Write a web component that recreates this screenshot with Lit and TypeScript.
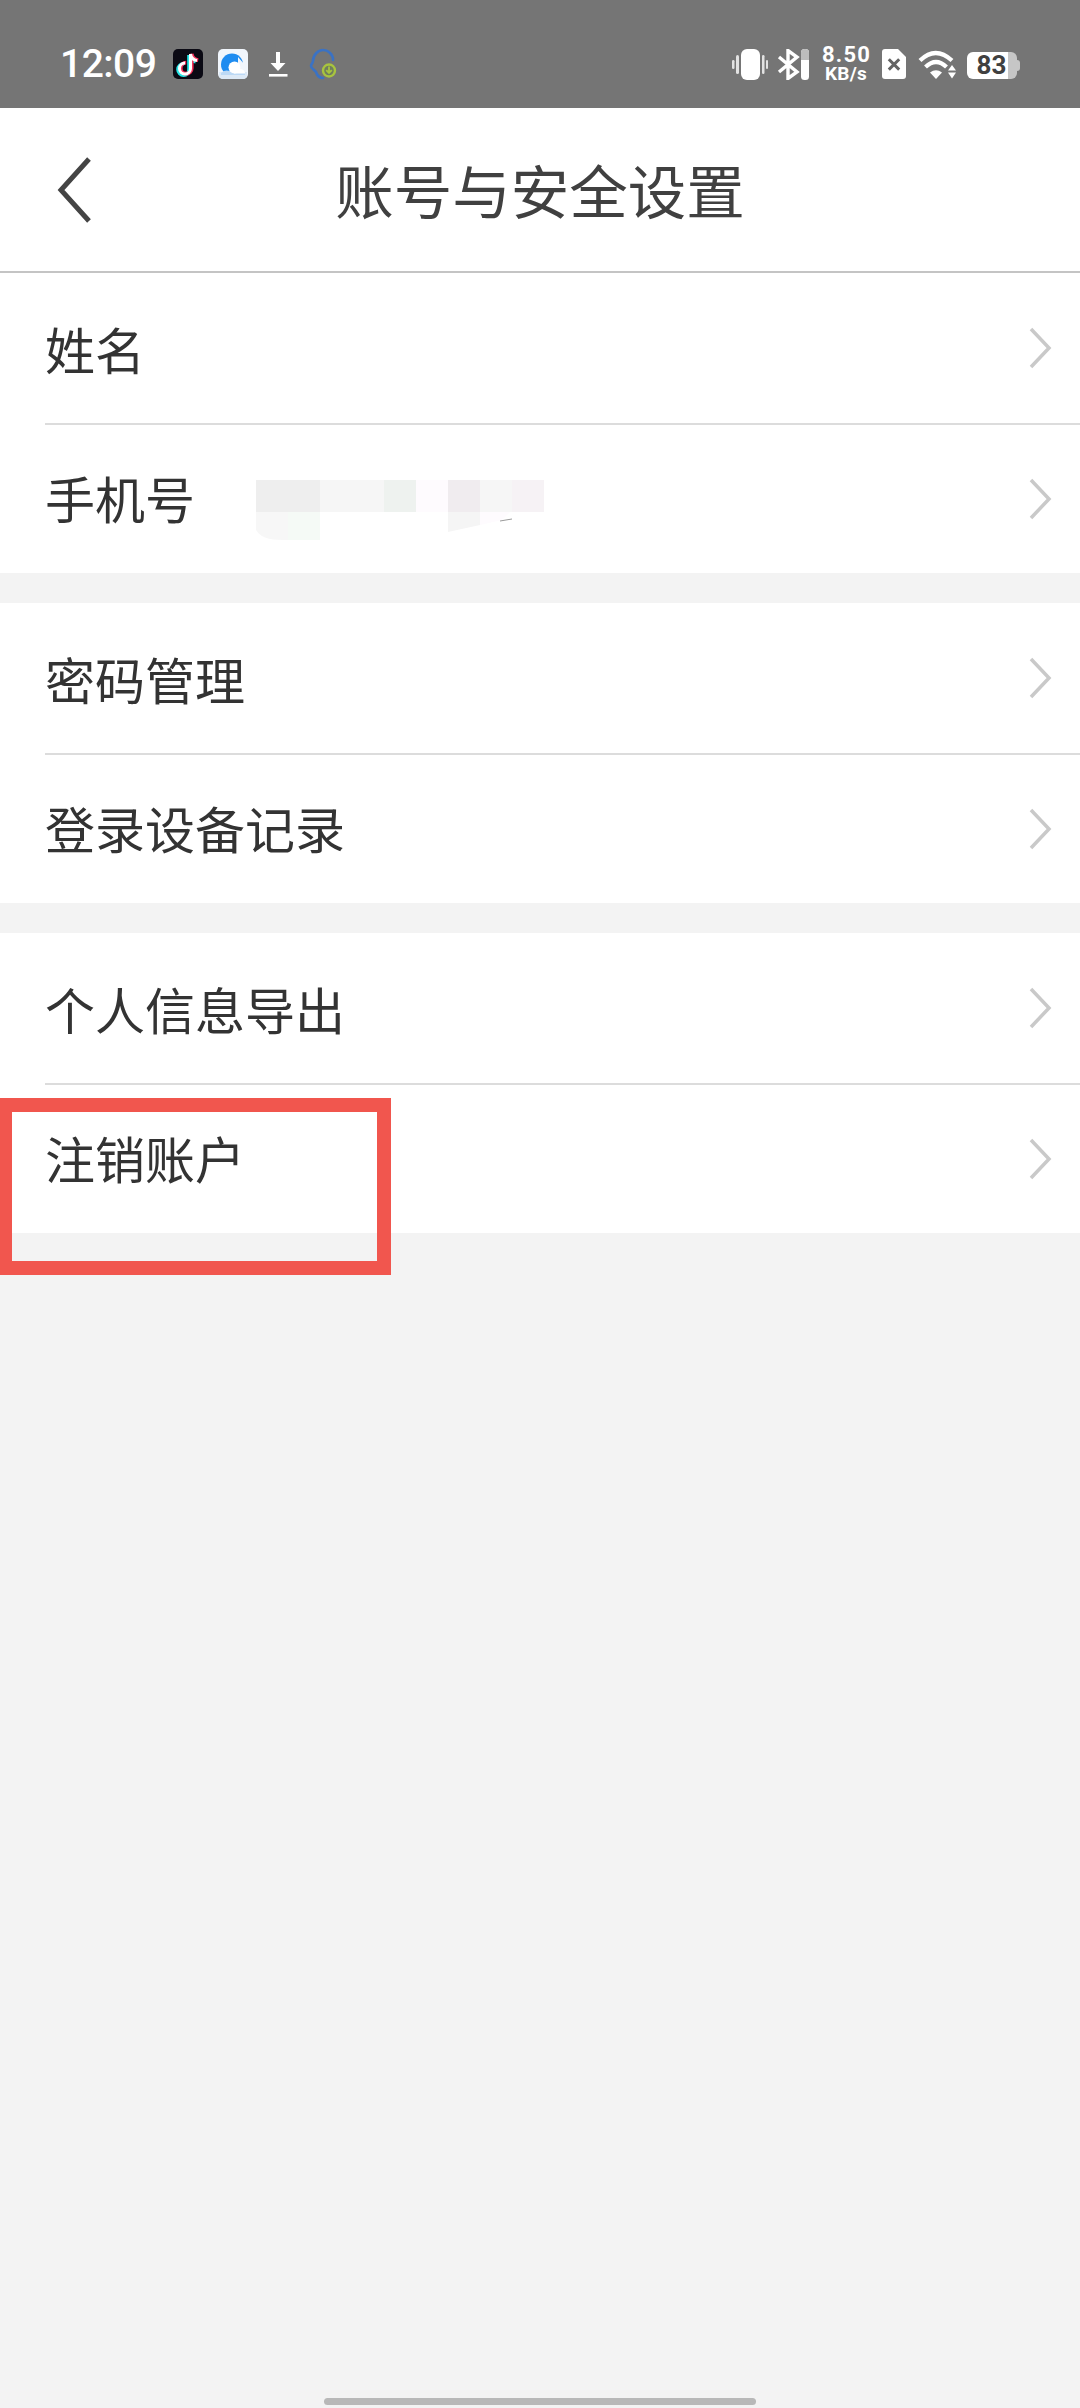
import { LitElement, html, css, svg } from "lit";
import { customElement } from "lit/decorators.js";

type Row = { label: string; masked?: boolean };

const SECTIONS: Row[][] = [
  [{ label: "姓名" }, { label: "手机号", masked: true }],
  [{ label: "密码管理" }, { label: "登录设备记录" }],
  [{ label: "个人信息导出" }, { label: "注销账户" }],
];

// Pixelated privacy mask over the phone number: [x, y, w, h, fill]
const MASK: [number, number, number, number, string][] = [
  [0, 0, 64, 32, "#eeeeee"],
  [64, 0, 64, 32, "#f6f6f6"],
  [128, 0, 32, 32, "#eef2ef"],
  [160, 0, 32, 32, "#fefbfe"],
  [192, 0, 32, 32, "#f0ecef"],
  [224, 0, 32, 32, "#f6f6f6"],
  [256, 0, 32, 32, "#f6f2f5"],
];

const NOTE = "M17.500 5v14.500a5.500 5.500 0 1 1-5.500-5.500M17.500 5c.5 3.500 3 6 6.500 6.500";

@customElement("app-root")
export class AppRoot extends LitElement {
  static styles = css`
    :host {
      display: block;
      position: relative;
      width: 1080px;
      height: 2408px;
      overflow: hidden;
      font-family: "Noto Sans CJK SC", "Noto Sans", sans-serif;
    }
    .page {
      display: flex;
      flex-direction: column;
      height: 100%;
      background: #f3f3f3;
    }
    .status {
      height: 108px;
      box-sizing: border-box;
      padding: 20px 60px 0;
      background: #757575;
      color: #fff;
      display: flex;
      align-items: center;
      justify-content: space-between;
      flex: none;
    }
    .status-left {
      display: flex;
      align-items: center;
      gap: 15px;
    }
    .status-right {
      display: flex;
      align-items: center;
      gap: 9px;
    }
    .status svg {
      display: block;
      flex: none;
    }
    .status svg.bt {
      margin-right: 4px;
    }
    .time {
      font: 500 39px/1 Roboto, sans-serif;
      letter-spacing: -0.5px;
      width: 98px;
    }
    .speed {
      width: 48px;
      font-family: Roboto, sans-serif;
      font-weight: 700;
      text-align: center;
      white-space: nowrap;
    }
    .speed div {
      font-size: 22px;
      line-height: 19px;
      letter-spacing: 1.200px;
    }
    .speed div + div {
      font-size: 19px;
      letter-spacing: 0.300px;
    }
    .battery {
      position: relative;
      width: 50px;
      height: 27px;
      margin: 2px 3px 0 2px;
      border-radius: 6px;
      background: linear-gradient(to right, #fff 82%, #c6c6c6 82%);
      color: #404040;
      font: 700 26px/27px Roboto, sans-serif;
      text-align: center;
      text-indent: -1px;
    }
    .battery::after {
      content: "";
      position: absolute;
      right: -3px;
      top: 8px;
      width: 3px;
      height: 11px;
      border-radius: 0 3px 3px 0;
      background: #c6c6c6;
    }
    .nav {
      height: 165px;
      box-sizing: border-box;
      flex: none;
      background: #fff;
      border-bottom: 2px solid #c4c4c4;
      display: grid;
      grid-template-columns: 1fr auto 1fr;
      align-items: center;
    }
    .back {
      display: block;
      margin-left: 55px;
    }
    .title {
      font-size: 58.500px;
      line-height: 1;
      color: #404040;
      white-space: nowrap;
    }
    .section {
      background: #fff;
      flex: none;
    }
    .section + .section {
      margin-top: 30px;
    }
    .row {
      margin-left: 45px;
      padding-right: 28px;
      height: 152px;
      box-sizing: border-box;
      display: flex;
      align-items: center;
      border-bottom: 2px solid #dcdcdc;
    }
    .row.last {
      height: 148px;
      border-bottom: none;
    }
    .label {
      font-size: 50px;
      line-height: 1;
      color: #333;
      white-space: nowrap;
    }
    .row.last .label {
      margin-bottom: 5px;
    }
    .mask {
      display: block;
      margin: 22px 0 0 61px;
    }
    .chevron {
      display: block;
      margin-left: auto;
    }
    .handle-wrap {
      margin-top: auto;
      padding-bottom: 3px;
      display: flex;
      justify-content: center;
    }
    .handle {
      width: 432px;
      height: 7px;
      border-radius: 4px;
      background: #b8b8b8;
    }
    .callout {
      position: absolute;
      left: 0;
      top: 1098px;
      width: 391px;
      height: 177px;
      box-sizing: border-box;
      border: 14px solid #f1564e;
      border-left-width: 12px;
    }
  `;

  private tiktok() {
    return html`<svg width="30" height="30" viewBox="0 0 30 30">
      <rect width="30" height="30" rx="5" fill="#0b0a14" />
      <path d=${NOTE} fill="none" stroke="#25e6e6" stroke-width="3.800" transform="translate(-1.400 1)" />
      <path d=${NOTE} fill="none" stroke="#f5305a" stroke-width="3.800" transform="translate(1.200 -.3)" />
      <path d=${NOTE} fill="none" stroke="#fff" stroke-width="3" />
    </svg>`;
  }

  private cloud() {
    return html`<svg width="30" height="30" viewBox="0 0 30 30">
      <rect width="30" height="30" rx="5" fill="#f1f6fc" />
      <circle cx="14" cy="15.500" r="11" fill="#1e8cf0" />
      <path d="M1 23h28v3a4 4 0 0 1-4 4H5a4 4 0 0 1-4-4z" fill="#dce9f6" />
      <path d="M3 24c3-3 6-3 9-2l15 1v3H3z" fill="#bcd9f5" />
      <path d="M20 8l7 8v8h-7z" fill="#f1f6fc" />
      <circle cx="16.500" cy="18.500" r="6" fill="#fff" />
      <path d="M16 24.500c0-3 3-5 6-4.500 3 0 5 2 5 4.500z" fill="#fff" />
    </svg>`;
  }

  private download() {
    return html`<svg width="30" height="30" viewBox="0 0 30 30">
      <path d="M13 3h4v11h5.500l-7.500 8-7.500-8H13z" fill="#fff" />
      <rect x="6" y="25" width="18.500" height="2.600" fill="#fff" />
    </svg>`;
  }

  private headset() {
    return html`<svg width="30" height="32" viewBox="0 0 30 32">
      <path d="M15 30c-4 0-6-3-7-6-1-2-5-3-5-6 0-2 2-3 2-5C5 7 10 2 15 2s10 4 10 10" fill="none" stroke="#3a72c4" stroke-width="2.600" stroke-linecap="round" />
      <circle cx="21" cy="22.500" r="6" fill="#6f7d5e" stroke="#a8c43e" stroke-width="2.400" />
      <path d="M21 18.500v6.500m-2.800-2.800 2.800 2.800 2.800-2.800" fill="none" stroke="#a8c43e" stroke-width="1.800" />
    </svg>`;
  }

  private vibrate() {
    return html`<svg width="36" height="31" viewBox="0 0 36 31" fill="#fff">
      <rect x="9" y="0" width="19" height="31" rx="6" />
      <rect x="4" y="6" width="3" height="19" rx="1.500" fill="#e2e2e2" />
      <rect x="0" y="11" width="2.500" height="9" rx="1.200" fill="#e2e2e2" />
      <rect x="30" y="6" width="2.500" height="19" rx="1.200" fill="#e2e2e2" />
      <rect x="34" y="11" width="2" height="9" rx="1" fill="#e2e2e2" />
    </svg>`;
  }

  private bluetooth() {
    return html`<svg class="bt" width="32" height="31" viewBox="0 0 32 31">
      <path d="M2 8l18 15-9 6.500v-28l9 6.500L2 23" fill="none" stroke="#fff" stroke-width="3.400" />
      <rect x="24" y="0" width="8" height="31" rx="3.500" fill="#fff" />
      <path d="M24 11V3.500A3.500 3.500 0 0 1 27.500 0h1A3.500 3.500 0 0 1 32 3.500V11z" fill="#bdbdbd" />
    </svg>`;
  }

  private sim() {
    return html`<svg width="30" height="30" viewBox="0 0 30 30">
      <path d="M6 0h13l8 8v19a3 3 0 0 1-3 3H6a3 3 0 0 1-3-3V3a3 3 0 0 1 3-3z" fill="#fff" />
      <path d="M9.800 10.200l10.400 10.400m0-10.400L9.800 20.600" stroke="#636363" stroke-width="3" />
    </svg>`;
  }

  private wifi() {
    return html`<svg width="38" height="29" viewBox="0 0 38 29">
      <g fill="none" stroke="#fff" stroke-width="4.200">
        <path d="M2 10.500Q17.500-4.600 34 10.500" />
        <path d="M7.500 17Q18 7 28.500 17" />
      </g>
      <path d="M12 22.500Q18 18 24 22.500L18 29z" fill="#fff" />
      <path d="M34 15l4 5.500h-8zM30 22.500h8L34 28.500z" fill="#fff" />
    </svg>`;
  }

  private chevron() {
    return html`<svg class="chevron" width="26" height="44" viewBox="0 0 26 44">
      <path d="M5 3l18 19L5 41" fill="none" stroke="#c9c9c9" stroke-width="3.500" />
    </svg>`;
  }

  private mask() {
    return html`<svg class="mask" width="288" height="60" viewBox="0 0 288 60">
      ${MASK.map(([x, y, w, h, fill]) => svg`<rect x=${x} y=${y} width=${w} height=${h} fill=${fill} />`)}
      <path d="M0 32h32v28c-14 0-26 0-32-10z" fill="#f7f7f7" />
      <path d="M32 32h32v29l-32-1z" fill="#f5faf6" />
      <path d="M192 32h32v13l-32 7z" fill="#f5f5f5" />
      <path d="M224 32h30l-8 8-22 5z" fill="#fefbfe" />
      <path d="M244 41l12-2" stroke="#9a9a9a" stroke-width="1" />
    </svg>`;
  }

  render() {
    return html`
      <div class="page">
        <header class="status">
          <div class="status-left">
            <span class="time">12:09</span>
            ${this.tiktok()} ${this.cloud()} ${this.download()} ${this.headset()}
          </div>
          <div class="status-right">
            ${this.vibrate()} ${this.bluetooth()}
            <div class="speed"><div>8.50</div><div>KB/s</div></div>
            ${this.sim()} ${this.wifi()}
            <div class="battery">83</div>
          </div>
        </header>
        <nav class="nav">
          <svg class="back" width="40" height="68" viewBox="0 0 40 68">
            <path d="M34 3L6 34l28 31" fill="none" stroke="#444" stroke-width="5" />
          </svg>
          <div class="title">账号与安全设置</div>
          <span></span>
        </nav>
        ${SECTIONS.map(
          (rows) => html`<section class="section">
            ${rows.map(
              (r, i) => html`<div class="row ${i === rows.length - 1 ? "last" : ""}">
                <span class="label">${r.label}</span>
                ${r.masked ? this.mask() : ""} ${this.chevron()}
              </div>`
            )}
          </section>`
        )}
        <div class="handle-wrap"><div class="handle"></div></div>
      </div>
      <div class="callout"></div>
    `;
  }
}
